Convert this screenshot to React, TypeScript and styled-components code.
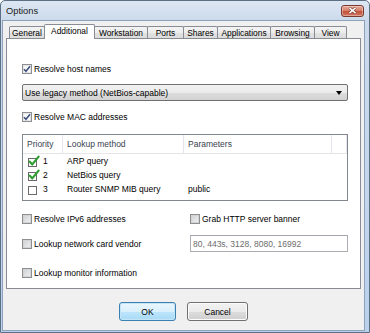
import styled, { createGlobalStyle } from "styled-components";

const GlobalStyle = createGlobalStyle`
  html, body {
    margin: 0;
    padding: 0;
    background: #ffffff;
  }
  body {
    width: 370px;
    height: 333px;
    overflow: hidden;
    font-family: "Liberation Sans", Arial, sans-serif;
    font-size: 8.5px;
    color: #000;
  }
`;

const Window = styled.div`
  width: 370px;
  height: 333px;
  box-sizing: border-box;
  border: 1px solid #5d6f85;
  border-radius: 5px 5px 0 0;
  background: linear-gradient(#dde7f3, #cbdaeb 20px, #c3d6ec 60%, #b9d1ec);
  display: flex;
  flex-direction: column;
`;

const TitleBar = styled.div`
  height: 19px;
  display: flex;
  align-items: center;
  justify-content: space-between;
  padding: 0 5px 0 5px;
`;

const Title = styled.span`
  font-size: 9.3px;
  color: #1b1b1b;
`;

const CloseButton = styled.div`
  width: 23px;
  height: 12px;
  box-sizing: border-box;
  border: 1px solid #7b3a30;
  border-radius: 3px;
  background: linear-gradient(#e8a797, #d7826f 45%, #c4523b 55%, #cf7860);
  display: flex;
  align-items: center;
  justify-content: center;
  box-shadow: inset 0 0 0 1px rgba(255, 255, 255, 0.35);
`;

const Client = styled.div`
  flex: 1;
  margin: 0 4px 1px 1px;
  border: 1px solid #8ea3bb;
  background: #f0f0f0;
  padding: 3px 3px 0 3px;
  display: flex;
  flex-direction: column;
`;

const TabStrip = styled.div`
  height: 14px;
  display: flex;
  align-items: flex-end;
  padding-left: 4px;
`;

const Tab = styled.div<{ $w: number; $active?: boolean }>`
  width: ${(p) => p.$w}px;
  height: ${(p) => (p.$active ? 15 : 12)}px;
  margin-bottom: ${(p) => (p.$active ? -1 : 0)}px;
  margin-left: -1px;
  box-sizing: border-box;
  border: 1px solid #898c95;
  border-bottom: none;
  border-radius: 2px 2px 0 0;
  background: ${(p) =>
    p.$active ? "#ffffff" : "linear-gradient(#f4f4f4, #ececec 50%, #e2e2e2 51%, #dcdcdc)"};
  position: relative;
  z-index: ${(p) => (p.$active ? 1 : 0)};
  display: flex;
  align-items: center;
  justify-content: center;
  font-size: 8.4px;
  padding-bottom: ${(p) => (p.$active ? 2 : 0)}px;
`;

const Panel = styled.div`
  height: 251px;
  box-sizing: border-box;
  border: 1px solid #898c95;
  background: #ffffff;
  padding: 0 12px 0 15px;
  display: flex;
  flex-direction: column;
`;

const OptionRow = styled.label<{ $mt?: number }>`
  height: 12px;
  margin-top: ${(p) => p.$mt ?? 0}px;
  display: flex;
  align-items: center;
  gap: 2px;
  white-space: nowrap;
`;

const Box = styled.span<{ $checked?: boolean }>`
  width: 10px;
  height: 10px;
  box-sizing: border-box;
  border: 1px solid #8e8f8f;
  flex-shrink: 0;
  background: ${(p) =>
    p.$checked
      ? "linear-gradient(135deg, #f4f4f4, #ffffff)"
      : "linear-gradient(135deg, #cdd0d4, #e4e4e4 60%, #f3f3f3)"};
  box-shadow: inset 0 0 0 1px ${(p) => (p.$checked ? "#e4e6ea" : "#d2d4d8")};
  display: flex;
  align-items: center;
  justify-content: center;
`;

const Dropdown = styled.div<{ $mt?: number }>`
  height: 17px;
  margin-top: ${(p) => p.$mt ?? 0}px;
  box-sizing: border-box;
  border: 1px solid #707070;
  border-radius: 2px;
  background: linear-gradient(#f2f2f2, #ebebeb 50%, #dddddd 51%, #d2d2d2);
  display: flex;
  align-items: center;
  justify-content: space-between;
  padding: 0 5px 0 2px;
`;

const Arrow = styled.span`
  width: 0;
  height: 0;
  border-left: 3px solid transparent;
  border-right: 3px solid transparent;
  border-top: 4px solid #000;
`;

const ListBox = styled.div<{ $mt?: number }>`
  height: 67px;
  margin-top: ${(p) => p.$mt ?? 0}px;
  box-sizing: border-box;
  border: 1px solid #828790;
  background: #fff;
`;

const HeaderRow = styled.div`
  height: 19px;
  display: grid;
  grid-template-columns: 40px 121px 148px 1fr;
  border-bottom: 1px solid #e5e5e5;
  box-sizing: border-box;
`;

const HeaderCell = styled.div`
  display: flex;
  align-items: center;
  padding-left: 4px;
  border-right: 1px solid #e3e6ea;
  color: #38424e;
`;

const ListRow = styled.div`
  height: 14px;
  display: grid;
  grid-template-columns: 40px 121px 148px 1fr;
  align-items: center;
`;

const Cell = styled.div`
  display: flex;
  align-items: center;
  gap: 3px;
  padding-left: 4px;
  white-space: nowrap;
`;

const BottomGrid = styled.div<{ $mt?: number }>`
  margin-top: ${(p) => p.$mt ?? 0}px;
  display: grid;
  grid-template-columns: 168px 1fr;
  align-items: center;
`;

const GridCell = styled.div<{ $mt?: number }>`
  margin-top: ${(p) => p.$mt ?? 0}px;
  display: flex;
  align-items: center;
`;

const PortsField = styled.div`
  width: 100%;
  height: 17px;
  box-sizing: border-box;
  border: 1px solid #abadb3;
  border-top-color: #a3a6ae;
  background: #fff;
  color: #6d6d6d;
  display: flex;
  align-items: center;
  padding-left: 2px;
`;

const ButtonRow = styled.div`
  flex: 1;
  display: flex;
  justify-content: center;
  align-items: flex-start;
  gap: 11px;
  padding-top: 13px;
`;

const Button = styled.div<{ $w: number; $default?: boolean }>`
  width: ${(p) => p.$w}px;
  height: 19px;
  box-sizing: border-box;
  border: 1px solid ${(p) => (p.$default ? "#3c7fb1" : "#707070")};
  border-radius: 3px;
  background: ${(p) =>
    p.$default
      ? "linear-gradient(#eaf6fd, #d9f0fc 50%, #bee6fd 51%, #a7d9f5)"
      : "linear-gradient(#f2f2f2, #ebebeb 50%, #dddddd 51%, #cfcfcf)"};
  box-shadow: inset 0 0 0 1px ${(p) => (p.$default ? "#c4e5f6" : "#fcfcfc")};
  display: flex;
  align-items: center;
  justify-content: center;
`;

function CheckMark() {
  return (
    <svg width="8" height="8" viewBox="0 0 8 8">
      <path d="M1 4.2 L3 6.3 L7 1.2" fill="none" stroke="#3b4f7a" strokeWidth="1.5" />
    </svg>
  );
}

function ListCheck({ checked }: { checked: boolean }) {
  return (
    <svg width="13" height="12" viewBox="0 0 13 12">
      <rect x="1.5" y="3.5" width="8" height="8" fill="#fff" stroke="#6a6a6a" />
      {checked && (
        <path
          d="M2.6 6.6 L5.3 9.4 L11.6 1.6"
          fill="none"
          stroke="#2f9e32"
          strokeWidth="2.2"
          strokeLinecap="round"
          strokeLinejoin="round"
        />
      )}
    </svg>
  );
}

function Option({ label, checked, mt }: { label: string; checked?: boolean; mt?: number }) {
  return (
    <OptionRow $mt={mt}>
      <Box $checked={checked}>{checked && <CheckMark />}</Box>
      <span>{label}</span>
    </OptionRow>
  );
}

const tabs = [
  { name: "General", w: 36 },
  { name: "Additional", w: 51, active: true },
  { name: "Workstation", w: 54 },
  { name: "Ports", w: 37 },
  { name: "Shares", w: 35 },
  { name: "Applications", w: 54 },
  { name: "Browsing", w: 45 },
  { name: "View", w: 33 },
];

const methods = [
  { prio: 1, name: "ARP query", params: "", checked: true },
  { prio: 2, name: "NetBios query", params: "", checked: true },
  { prio: 3, name: "Router SNMP MIB query", params: "public", checked: false },
];

export default function App() {
  return (
    <>
      <GlobalStyle />
      <Window>
        <TitleBar>
          <Title>Options</Title>
          <CloseButton>
            <svg width="9" height="7" viewBox="0 0 9 7">
              <path d="M1.5 0.8 L7.5 6.2 M7.5 0.8 L1.5 6.2" stroke="#5a1f14" strokeWidth="2.6" />
              <path d="M1.5 0.8 L7.5 6.2 M7.5 0.8 L1.5 6.2" stroke="#ffffff" strokeWidth="1.6" />
            </svg>
          </CloseButton>
        </TitleBar>
        <Client>
          <TabStrip>
            {tabs.map((t) => (
              <Tab key={t.name} $w={t.w} $active={t.active}>
                {t.name}
              </Tab>
            ))}
          </TabStrip>
          <Panel>
            <Option label="Resolve host names" checked mt={24} />
            <Dropdown $mt={9}>
              <span>Use legacy method (NetBios-capable)</span>
              <Arrow />
            </Dropdown>
            <Option label="Resolve MAC addresses" checked mt={10} />
            <ListBox $mt={11}>
              <HeaderRow>
                <HeaderCell>Priority</HeaderCell>
                <HeaderCell>Lookup method</HeaderCell>
                <HeaderCell>Parameters</HeaderCell>
                <HeaderCell />
              </HeaderRow>
              {methods.map((m) => (
                <ListRow key={m.prio}>
                  <Cell>
                    <ListCheck checked={m.checked} />
                    <span>{m.prio}</span>
                  </Cell>
                  <Cell>{m.name}</Cell>
                  <Cell>{m.params}</Cell>
                  <Cell />
                </ListRow>
              ))}
            </ListBox>
            <BottomGrid $mt={12}>
              <GridCell>
                <Option label="Resolve IPv6 addresses" />
              </GridCell>
              <GridCell>
                <Option label="Grab HTTP server banner" />
              </GridCell>
              <GridCell $mt={10}>
                <Option label="Lookup network card vendor" />
              </GridCell>
              <GridCell $mt={10}>
                <PortsField>80, 443s, 3128, 8080, 16992</PortsField>
              </GridCell>
              <GridCell $mt={15}>
                <Option label="Lookup monitor information" />
              </GridCell>
            </BottomGrid>
          </Panel>
          <ButtonRow>
            <Button $w={57} $default>
              OK
            </Button>
            <Button $w={61}>Cancel</Button>
          </ButtonRow>
        </Client>
      </Window>
    </>
  );
}
